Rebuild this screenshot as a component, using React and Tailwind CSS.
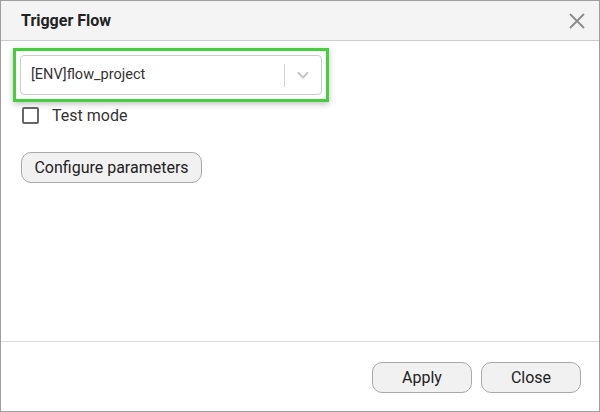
import React, { useState } from 'react';

const ChevronDown = () => (
  <svg width="14" height="14" viewBox="0 0 14 14" fill="none">
    <path d="M2.5 5l4.5 4.5 4.5-4.5" stroke="#c4c4c4" strokeWidth="2" strokeLinecap="round" strokeLinejoin="round" />
  </svg>
);

const CloseIcon = () => (
  <svg width="16" height="16" viewBox="0 0 16 16" fill="none">
    <path d="M1.5 1.5l13 13M14.5 1.5l-13 13" stroke="#8a8a8a" strokeWidth="1.8" strokeLinecap="round" />
  </svg>
);

const GrayButton = ({ children, className = '' }) => (
  <button
    className={`flex items-center justify-center h-[31px] rounded-[10px] border border-[#a9a9a9] bg-[#f1f1f1] text-[16px] text-[#222] ${className}`}
  >
    {children}
  </button>
);

export default function App() {
  const [testMode, setTestMode] = useState(false);

  return (
    <div
      className="w-[600px] h-[412px] bg-white border border-[#9e9e9e] flex flex-col"
      style={{ fontFamily: 'Roboto, "Liberation Sans", sans-serif' }}
    >
      {/* Header */}
      <div className="h-[40px] shrink-0 bg-[#f4f4f4] border-b border-[#cfcfcf] flex items-center justify-between pl-[20px] pr-[14px]">
        <h1 className="text-[16px] font-bold text-[#222]">Trigger Flow</h1>
        <button className="p-0">
          <CloseIcon />
        </button>
      </div>

      {/* Body */}
      <div className="flex-1 flex flex-col items-start pl-[12px] pt-[7px]">
        <div className="w-[316px] h-[54px] border-[3px] border-[#45cf3d] p-[4px] shadow-[0_2px_6px_rgba(0,0,0,0.25)]">
          <div className="h-full rounded-[4px] border border-[#cccccc] bg-white flex items-center">
            <span className="flex-1 pl-[10px] text-[14.5px] text-[#333]">[ENV]flow_project</span>
            <span className="w-px h-[23px] bg-[#d0d0d0]" />
            <span className="w-[36px] flex justify-center">
              <ChevronDown />
            </span>
          </div>
        </div>

        <label className="flex items-center gap-[13px] mt-[4px] ml-[9px] h-[19px] leading-[19px] cursor-pointer">
          <span
            onClick={() => setTestMode(!testMode)}
            className="w-[17px] h-[17px] rounded-[2px] border-2 border-[#666] bg-white"
          />
          <span className="text-[16px] text-[#333]">Test mode</span>
        </label>

        <GrayButton className="mt-[27px] ml-[8px] w-[181px]">Configure parameters</GrayButton>
      </div>

      {/* Footer */}
      <div className="h-[70px] shrink-0 border-t border-[#dcdcdc] flex items-start justify-end gap-[9px] pt-[20px] pr-[18px]">
        <GrayButton className="w-[100px]">Apply</GrayButton>
        <GrayButton className="w-[100px]">Close</GrayButton>
      </div>
    </div>
  );
}
